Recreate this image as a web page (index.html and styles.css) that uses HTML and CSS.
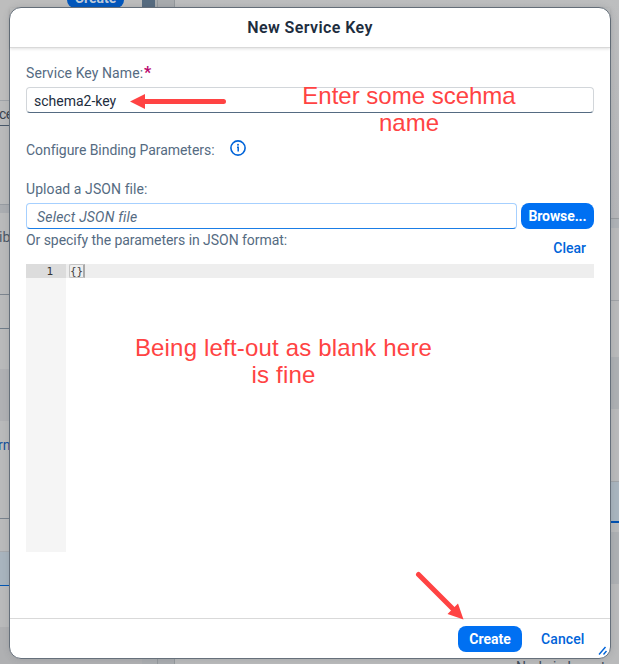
FILE: index.html
```
<!DOCTYPE html>
<html lang="en">
<head>
<meta charset="utf-8">
<title>New Service Key</title>
<link rel="stylesheet" href="styles.css">
</head>
<body>
<div class="page">
  <div class="column left">
    <div class="row l-head"><span class="bg-button">Create</span></div>
    <div class="row l-input">ce</div>
    <div class="row l-gap"></div>
    <div class="row l-split"></div>
    <div class="row l-label">ib</div>
    <div class="row l-field"></div>
    <div class="row l-blank"></div>
    <div class="row l-band"></div>
    <div class="row l-link">rn</div>
    <div class="row l-item"></div>
    <div class="row l-selected"></div>
    <div class="row l-after"></div>
    <div class="row l-end"></div>
  </div>
  <div class="scrollbar"><span class="scroll-thumb"></span></div>
  <div class="scroll-track"></div>
  <div class="column right">
    <div class="row r-top"></div>
    <div class="row r-split"></div>
    <div class="row r-one"></div>
    <div class="row r-two"></div>
    <div class="row r-band"></div>
    <div class="row r-three"></div>
    <div class="row r-selected"></div>
    <div class="row r-gap"></div>
    <div class="row r-band"></div>
    <div class="row r-end">Node.js.Invent</div>
  </div>
</div>

<section class="dialog">
  <header class="title"><h1>New Service Key</h1></header>
  <main class="body">
    <label class="label name-label"><span class="name-text">Service Key Name:</span><span class="required">*</span></label>
    <div class="input name-input"><span>schema2-key</span></div>
    <div class="configure">
      <span class="label conf-text">Configure Binding Parameters:</span>
      <svg class="info" viewBox="0 0 16 16" fill="none" stroke="#0064d9"><circle cx="8" cy="8" r="7.1" stroke-width="1.6"/><path d="M7 7.2H8.2V11.4" stroke-width="1.5"/><circle cx="8" cy="4.7" r=".95" fill="#0064d9" stroke="none"/></svg>
    </div>
    <div class="label upload-label"><span class="upload-text">Upload a JSON file:</span></div>
    <div class="upload">
      <div class="input file-input"><span>Select JSON file</span></div>
      <button class="button browse"><span>Browse...</span></button>
    </div>
    <div class="spec">
      <span class="label spec-text">Or specify the parameters in JSON format:</span>
      <span class="link clear">Clear</span>
    </div>
    <div class="editor">
      <div class="gutter"><div class="line-no">1</div></div>
      <div class="code"><div class="code-line"><span class="brace">{}</span></div></div>
    </div>
  </main>
  <footer class="footer">
    <button class="button create"><span>Create</span></button>
    <span class="link cancel">Cancel</span>
  </footer>
  <svg class="resize" viewBox="0 0 10 10" stroke="#0064d9" stroke-width="1.4"><path d="M1 8.5L7.5 1M5.5 8.5L8.5 5"/></svg>
</section>

<div class="note note-name">Enter some scehma<br>name</div>
<div class="note note-json">Being left-out as blank here<br>is fine</div>
<svg class="arrows" viewBox="0 0 619 664" fill="#ff4343" stroke="#ff4343">
  <path d="M142 101.5H223.5M418.5 574.5L454 610" fill="none" stroke-width="5" stroke-linecap="round"/>
  <path d="M130 101.5L145 94V109ZM463.5 619.5L447.5 614L458 603.5Z" stroke="none"/>
</svg>
</body>
</html>
```
FILE: styles.css
```
* { box-sizing: border-box; }
body { margin: 0; width: 619px; height: 664px; overflow: hidden; position: relative; font: 14px/18px Roboto, sans-serif; color: #556b82; }
h1 { margin: 0; }
button { border: 0; padding: 0; font: inherit; }
.page { display: flex; height: 664px; background: #b9babb; }
.column { display: flex; flex-direction: column; }
.left { width: 142px; }
.right { flex: 1; }
.row { flex: none; overflow: hidden; }
.l-head { height: 101px; border-bottom: 1px solid #9fa3a8; background: #bdbdbd; }
.bg-button { display: block; margin: -17px 0 0 67px; width: 57px; height: 25px; border-radius: 8px; background: #0057be; color: #c0cbda; text-align: center; font-weight: 700; line-height: 31px; }
.l-input { height: 25px; border-bottom: 1px solid #48586a; color: #39434e; line-height: 26px; text-indent: -1px; letter-spacing: -.5px; }
.l-gap { height: 79px; border-bottom: 1px solid #979ca2; }
.l-split { height: 8px; background: #aaadb1; }
.l-label { height: 82px; padding-top: 15px; border-bottom: 1px solid #7c858f; color: #4b5866; text-indent: -1px; }
.l-field { height: 34px; border-bottom: 1px solid #6f7c89; }
.l-blank { height: 40px; }
.l-band { height: 52px; background: #b0b1b4; }
.l-link { height: 98px; padding-top: 15px; border-bottom: 1px solid #78828d; color: #15519c; text-indent: -2px; }
.l-item { height: 33px; border-bottom: 1px solid #a6a9ad; }
.l-selected { height: 34px; background: #a8b4be; border-bottom: 1px solid #0056b4; }
.l-after { height: 41px; }
.l-end { height: 38px; background: #afb0b2; }
.r-top { height: 219px; border-bottom: 1px solid #999c9f; background: linear-gradient(#bdbebf, #b5b6b9); }
.scrollbar { width: 15px; background: #aaadb0; }
.scroll-thumb { display: block; width: 13px; height: 9px; background: #566b80; }
.scroll-track { width: 18px; background: #a9acaf; border: solid #94999d; border-width: 0 1px; }
.r-split { height: 9px; background: #aeb2b6; }
.r-one { height: 73px; border-bottom: 1px solid #9fa2a6; }
.r-two { height: 56px; }
.r-band { height: 52px; background: #adb0b3; }
.r-three { height: 73px; border-bottom: 1px solid #a0a4a8; }
.r-selected { height: 41px; background: #a9b5bf; border-bottom: 2px solid #0050b0; }
.r-gap { height: 9px; }
.r-end { height: 80px; padding: 74px 0 0 341px; color: #3e4c5b; }

.dialog { position: absolute; left: 9px; top: 7px; width: 602px; height: 652px; display: flex; flex-direction: column; background: #fff; border: 1px solid #66707b; border-radius: 12px; box-shadow: 0 0 7px rgba(70, 75, 82, .18); }
.title { height: 40px; border-bottom: 1px solid #d9d9d9; box-shadow: 0 1px 3px rgba(0,0,0,.12); text-align: center; }
.title h1 { font-size: 16px; line-height: 40px; font-weight: 600; color: #1d2d3e; letter-spacing: .4px; }
.body { flex: 1; padding: 0 16px; }
.label { color: #556b82; white-space: nowrap; font-size: 14px; line-height: 18px; letter-spacing: -.05px; }
.name-label { display: flex; padding-top: 16px; height: 39px; }
.name-text { letter-spacing: .08px; }
.required { margin-left: 1px; color: #ba066c; font-weight: 700; font-size: 16px; }
.input { height: 26px; border: 1px solid #d2d6da; border-bottom-color: #556b82; border-radius: 4px; background: #fff; line-height: 26px; font-size: 14px; }
.name-input { padding-left: 7px; color: #1d2d3e; }
.configure { display: flex; height: 66px; padding-top: 27px; }
.conf-text { width: 204px; padding-top: 1px; }
.info { width: 16px; height: 16px; }
.upload-label { height: 24px; padding-top: 1px; letter-spacing: .08px; }
.upload { display: flex; gap: 4px; }
.file-input { width: 491px; padding-left: 10px; border-color: #a6d0ff; border-bottom-color: #1a7de6; font-style: italic; letter-spacing: .2px; }
.button { height: 26px; border-radius: 8px; background: #0070f2; color: #fff; font-weight: 700; font-size: 14px; line-height: 26px; }
.browse { width: 73px; letter-spacing: -.1px; }
.spec { display: flex; justify-content: space-between; height: 35px; padding: 2px 8px 0 0; }
.link { color: #0064d9; font-weight: 500; font-size: 14px; }
.clear { padding-top: 8px; }
.editor { display: flex; height: 288px; font: 12px/14px "DejaVu Sans Mono", monospace; }
.gutter { width: 40px; background: #f5f5f5; color: #333; }
.line-no { height: 14px; padding-right: 13px; text-align: right; background: #dcdcdc; font-size: 11px; line-height: 15px; }
.code { flex: 1; }
.code-line { height: 14px; padding-left: 3px; background: #eee; display: flex; }
.brace { width: 16px; height: 14px; border: 1px solid #c5c5c5; border-right: 2px solid #aaa; border-radius: 2px 0 0 2px; line-height: 13px; font-size: 11px; color: #444; }
.footer { height: 40px; display: flex; border-top: 1px solid #d9d9d9; padding: 7px 0 0 448px; }
.create { width: 64px; }
.cancel { margin-left: 19px; line-height: 26px; letter-spacing: .1px; }
.resize { position: absolute; right: 2px; bottom: 2px; width: 10px; height: 10px; }
.note { position: absolute; color: #ff4343; font: 24px/27px "Liberation Sans", Arial, sans-serif; text-align: center; white-space: nowrap; }
.note-name { left: 302px; top: 82px; width: 214px; }
.note-json { left: 134px; top: 334px; width: 299px; letter-spacing: .18px; }
.arrows { position: absolute; left: 0; top: 0; width: 619px; height: 664px; pointer-events: none; }
```
